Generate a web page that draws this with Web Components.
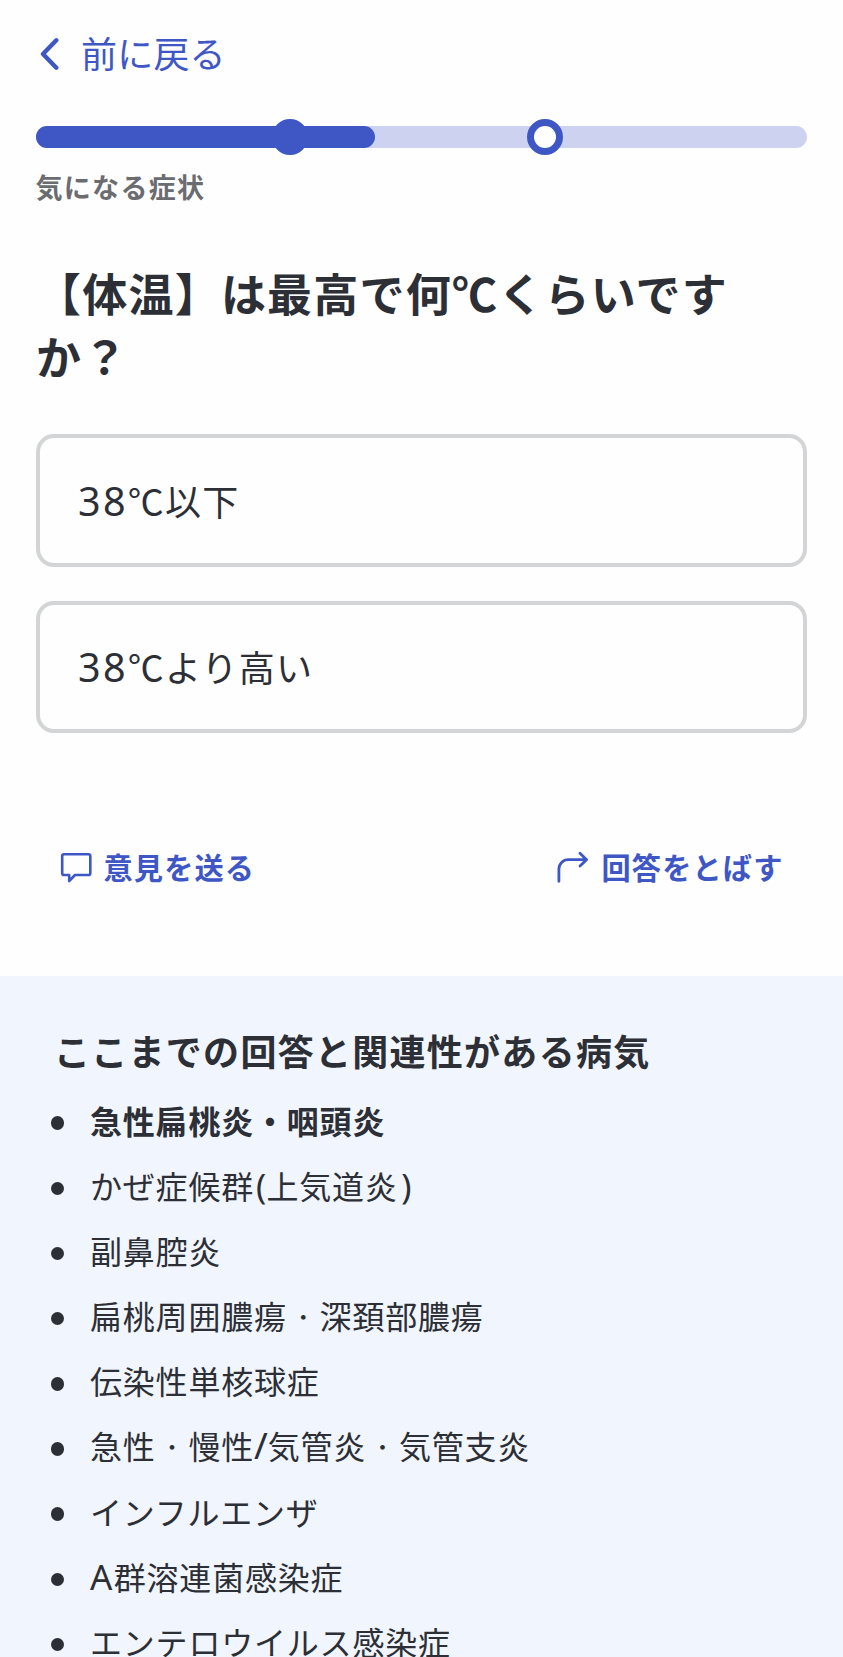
<!DOCTYPE html>
<html lang="ja">
<head>
<meta charset="utf-8">
<title>症状の質問</title>
<style>
html,body{margin:0;padding:0;background:#fefefe}
body{font-family:"Noto Sans CJK JP","Noto Sans",sans-serif;color:#2d2f36;height:1657px;overflow:hidden}
</style>
</head>
<body>
<symptom-page></symptom-page>
<script>
class Base extends HTMLElement{
  constructor(){
    super();
    const t=document.createElement('template');
    t.innerHTML=`<style>*{box-sizing:border-box}</style>`+this.markup();
    this.attachShadow({mode:'open'}).append(t.content.cloneNode(true));
  }
}
customElements.define('back-link',class extends Base{
  markup(){return `<style>
  :host{display:flex;align-items:center;gap:21px;height:72px;padding-left:4px;color:#3f57c5;font-size:36px;letter-spacing:.2px;line-height:72px}
  svg{display:block;width:20px;height:34px;margin-top:4px}
  </style><svg viewBox="0 0 20 34" fill="none" stroke="currentColor" stroke-width="4.4" stroke-linecap="round" stroke-linejoin="round"><path d="M16.3 3.3L3 17l13.3 13.7"/></svg><span><slot></slot></span>`}
});
customElements.define('step-progress',class extends Base{
  markup(){return `<style>
  :host{display:block;position:relative;height:22px;border-radius:11px;background:#cdd2f0}
  .fill{width:339px;height:22px;border-radius:11px;background:#3f57c5}
  .dot{position:absolute;top:-7px;width:36px;height:36px;border-radius:50%;border:7px solid #3f57c5}
  .done{left:236px;background:#3f57c5}
  .next{left:491px;background:#fff}
  </style><div class="fill"></div><i class="dot done"></i><i class="dot next"></i>`}
});
customElements.define('answer-option',class extends Base{
  markup(){return `<style>
  :host{display:flex;align-items:center;height:132.5px;border:4.4px solid #d3d4d5;border-radius:18px;background:#fefefe;padding:0 36px 0 38px;font-size:36px;letter-spacing:1.2px;line-height:60px}
  ::slotted(span){font-family:"Noto Sans",sans-serif;font-size:39.5px;letter-spacing:2.3px}
  </style><div><slot name="num"></slot><slot></slot></div>`}
});
customElements.define('action-link',class extends Base{
  markup(){return `<style>
  :host{display:flex;align-items:center;gap:10px;color:#3f57c5;font-size:29.2px;font-weight:700;letter-spacing:1.15px;line-height:44px}
  ::slotted(svg){display:block;width:34px;height:34px;margin:3px 1px 0 -1px}
  </style><slot name="icon"></slot><span><slot></slot></span>`}
});
customElements.define('disease-item',class extends Base{
  markup(){return `<style>
  :host{display:flex;align-items:center;height:65.2px;font-size:32px;letter-spacing:.8px;line-height:65.2px;white-space:nowrap}
  :host([strong]){font-weight:700}
  i{width:13.5px;height:13.5px;border-radius:50%;background:#2d2f36;margin:6px 26px 0 50.5px}
  ::slotted(span){font-family:"Noto Sans",sans-serif;line-height:1}
  ::slotted(em){display:inline-block;width:32.8px;font-style:normal;font-size:22px;letter-spacing:0;line-height:1;text-align:center;vertical-align:4px}
  </style><i></i><div><slot></slot></div>`}
});
customElements.define('related-diseases',class extends Base{
  markup(){return `<style>
  :host{display:block;background:#f1f5fd;height:681.5px;padding-top:46px;overflow:hidden}
  h2{margin:0 0 10px 54px;font-size:36px;letter-spacing:1.28px;line-height:56px;font-weight:700}
  </style><h2><slot name="title"></slot></h2><slot></slot>`}
});
customElements.define('symptom-page',class extends Base{
  markup(){return `<style>
  :host{display:block;width:843px}
  main{height:975.5px;padding:16px 36px 0}
  step-progress{margin-top:38px}
  .label{margin:17px 0 0 -.5px;font-size:27px;letter-spacing:1.3px;line-height:44px;font-weight:700;color:#6b6c70}
  h1{margin:52px 0 0;font-size:45px;letter-spacing:1.22px;line-height:63px;font-weight:700;text-spacing-trim:space-all}
  .options{display:grid;gap:34px;margin-top:47px}
  .actions{display:flex;justify-content:space-between;padding:0 23.5px 0 23.5px;margin-top:111px}
  </style>
  <main>
    <back-link>前に戻る</back-link>
    <step-progress></step-progress>
    <div class="label">気になる症状</div>
    <h1>【体温】は最高で何℃くらいですか？</h1>
    <div class="options">
      <answer-option><span slot="num">38</span>℃以下</answer-option>
      <answer-option><span slot="num">38</span>℃より高い</answer-option>
    </div>
    <div class="actions">
      <action-link><svg slot="icon" viewBox="0 0 34 34" fill="none" stroke="currentColor" stroke-width="2.6" stroke-linejoin="round"><path d="M5 3.2h24.5a1.8 1.8 0 0 1 1.8 1.8v17.2a1.8 1.8 0 0 1-1.8 1.8H16l-5.8 6V24H5a1.8 1.8 0 0 1-1.8-1.8V5A1.8 1.8 0 0 1 5 3.2z"/></svg>意見を送る</action-link>
      <action-link><svg slot="icon" viewBox="0 0 34 34" fill="none" stroke="currentColor" stroke-width="2.8" stroke-linecap="round" stroke-linejoin="round"><path d="M2.9 30.3V18a9.3 9.3 0 0 1 9.3-9.3H30.6M24 2.3l6.6 6.4-6.6 6.4"/></svg>回答をとばす</action-link>
    </div>
  </main>
  <related-diseases>
    <span slot="title">ここまでの回答と関連性がある病気</span>
    <disease-item strong>急性扁桃炎・咽頭炎</disease-item>
    <disease-item>かぜ症候群<span style="margin-left:2px;font-size:34px;letter-spacing:.3px">(</span>上気道炎<span style="margin-left:3.5px;font-size:34px">)</span></disease-item>
    <disease-item>副鼻腔炎</disease-item>
    <disease-item>扁桃周囲膿瘍<em>・</em>深頚部膿瘍</disease-item>
    <disease-item>伝染性単核球症</disease-item>
    <disease-item>急性<em>・</em>慢性<span style="font-size:37px;letter-spacing:0">/</span>気管炎<em>・</em>気管支炎</disease-item>
    <disease-item>インフルエンザ</disease-item>
    <disease-item><span style="font-size:35px;letter-spacing:1.4px">A</span>群溶連菌感染症</disease-item>
    <disease-item>エンテロウイルス感染症</disease-item>
  </related-diseases>`}
});
</script>
</body>
</html>
